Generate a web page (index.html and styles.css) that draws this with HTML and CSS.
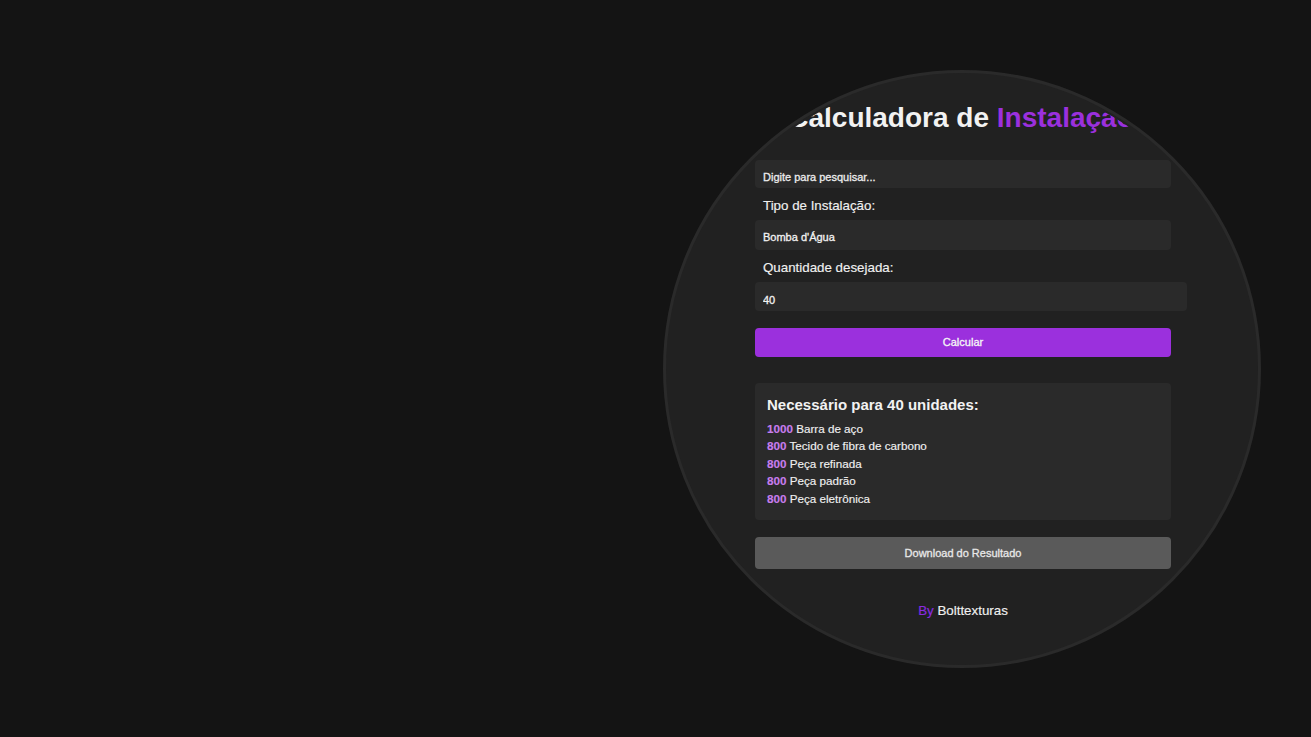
FILE: index.html
```html
<!DOCTYPE html>
<html lang="pt-BR">
<head>
<meta charset="utf-8">
<title>Calculadora de Instalação</title>
<link rel="stylesheet" href="styles.css">
</head>
<body>
<main class="circle">
  <div class="disc">
    <h1 class="title">Calculadora de <span class="accent">Instalação</span></h1>
    <div class="form">
      <input class="field search" type="text" placeholder="Digite para pesquisar...">
      <label class="label" for="tipo">Tipo de Instalação:</label>
      <select class="field select" id="tipo">
        <option>Bomba d'Água</option>
      </select>
      <label class="label" for="qtd">Quantidade desejada:</label>
      <input class="field number" id="qtd" type="number" value="40">
      <button class="btn btn-calc" type="button">Calcular</button>
      <section class="result">
        <h3 class="result-title">Necessário para 40 unidades:</h3>
        <ul class="items">
          <li><span class="qty">1000</span> Barra de aço</li>
          <li><span class="qty">800</span> Tecido de fibra de carbono</li>
          <li><span class="qty">800</span> Peça refinada</li>
          <li><span class="qty">800</span> Peça padrão</li>
          <li><span class="qty">800</span> Peça eletrônica</li>
        </ul>
      </section>
      <button class="btn btn-download" type="button">Download do Resultado</button>
      <p class="credit"><span class="by">By</span> Bolttexturas</p>
    </div>
  </div>
</main>
</body>
</html>
```

FILE: styles.css
```css
html, body {
  margin: 0;
  height: 100%;
}

body {
  background: #141414;
  display: flex;
  align-items: center;
  justify-content: flex-end;
  padding-right: 50px;
  box-sizing: border-box;
  font-family: "Liberation Sans", Arial, sans-serif;
  color: #f0f0f0;
}

.circle {
  width: 598px;
  height: 598px;
  flex: none;
  box-sizing: border-box;
  border: 3px solid #2a2a2a;
  border-radius: 50%;
  background: #212121;
  padding: 2px;
}

.disc {
  width: 100%;
  height: 100%;
  border-radius: 50%;
  overflow: hidden;
  display: flex;
  flex-direction: column;
  align-items: center;
  padding-top: 27px;
  box-sizing: border-box;
}

.title {
  margin: 0 2px 26px 0;
  font-size: 28px;
  line-height: 32px;
  font-weight: bold;
  color: #f2f2f2;
  white-space: nowrap;
}

.accent {
  color: #9b30dd;
}

.form {
  width: 416px;
  margin-left: 2px;
  display: flex;
  flex-direction: column;
  align-items: flex-start;
}

.field {
  border: none;
  outline: none;
  margin: 0;
  background: #2a2a2a;
  color: #f2f2f2;
  border-radius: 4px;
  font-family: "Liberation Sans", Arial, sans-serif;
  font-size: 11px;
  -webkit-text-stroke: 0.3px currentColor;
}

.search {
  width: 100%;
  height: 28px;
  box-sizing: border-box;
  padding: 12px 8px 6px;
  line-height: 10px;
}

.search::placeholder {
  color: #ececec;
  opacity: 1;
}

.select {
  width: 100%;
  height: 30px;
  box-sizing: border-box;
  padding: 4px 8px 0;
  -webkit-appearance: none;
  appearance: none;
}

.number {
  width: 100%;
  height: 22px;
  box-sizing: content-box;
  padding: 7px 8px 0;
  -moz-appearance: textfield;
}

.number::-webkit-inner-spin-button,
.number::-webkit-outer-spin-button {
  -webkit-appearance: none;
  margin: 0;
}

.label {
  margin: 10px 0 7px 8px;
  font-size: 13.33px;
  line-height: 15px;
  color: #f0f0f0;
  -webkit-text-stroke: 0.15px currentColor;
}

.btn {
  width: 100%;
  border: none;
  border-radius: 4px;
  font-family: "Liberation Sans", Arial, sans-serif;
  font-size: 11px;
  padding: 0;
  cursor: pointer;
  -webkit-text-stroke: 0.3px currentColor;
}

.btn-calc {
  margin-top: 17px;
  height: 29px;
  background: #9b30dd;
  color: #f6f6f6;
}

.result {
  margin-top: 26px;
  width: 100%;
  box-sizing: border-box;
  background: #2a2a2a;
  border-radius: 4px;
  padding: 13px 12px;
}

.result-title {
  margin: 0 0 7px;
  font-size: 15px;
  line-height: 17px;
  font-weight: bold;
  color: #f2f2f2;
}

.items {
  list-style: none;
  margin: 0;
  padding: 0;
  font-size: 11.67px;
  line-height: 17.5px;
  color: #f0f0f0;
  -webkit-text-stroke: 0.15px currentColor;
}

.qty {
  font-weight: bold;
  color: #c77ded;
}

.btn-download {
  margin-top: 17px;
  height: 32px;
  background: #5a5a5a;
  color: #e8e8e8;
}

.credit {
  align-self: center;
  margin: 34px 0 0;
  font-size: 13.33px;
  line-height: 15px;
  color: #f0f0f0;
  -webkit-text-stroke: 0.15px currentColor;
}

.by {
  color: #8a2be2;
}
```
